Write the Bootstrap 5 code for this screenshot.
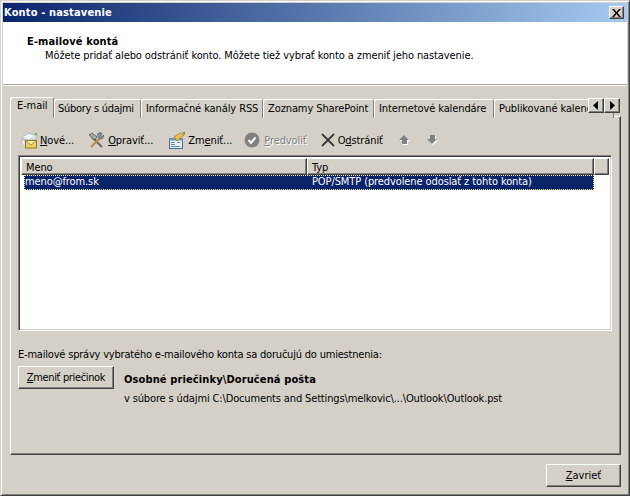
<!DOCTYPE html>
<html lang="sk"><head><meta charset="utf-8"><title>Konto - nastavenie</title>
<link href="https://cdn.jsdelivr.net/npm/bootstrap@5.3.0/dist/css/bootstrap.min.css" rel="stylesheet">
<style>
html,body{margin:0;padding:0;background:#d4d0c8;overflow:hidden}
body{width:630px;height:496px;font:11px/13px "DejaVu Sans Condensed","DejaVu Sans",sans-serif;font-stretch:condensed;color:#000;letter-spacing:-.1px}
b{letter-spacing:.12px}
u{text-decoration-thickness:1px;text-underline-offset:1px}
.win{width:630px;height:496px;background:#d4d0c8;border:1px solid;border-color:#d4d0c8 #404040 #404040 #d4d0c8;box-shadow:inset 1px 1px 0 #fff,inset -1px -1px 0 #808080;padding:2px}
.ttl{height:19px;margin:0;padding:0 2px 0 1px;background:linear-gradient(90deg,#0a246a,#a6caf0);color:#fff;font-weight:700;font-size:11px;letter-spacing:.15px}
.xbtn{width:15px;height:13px;padding:0;background:#d4d0c8;border:1px solid;border-color:#fff #404040 #404040 #fff;box-shadow:inset -1px -1px 0 #808080;border-radius:0;line-height:0;margin-right:1px}
.hdr{height:63px;background:#fff;border-bottom:1px solid #aca899;box-shadow:0 1px 0 #fff;padding:13px 0 0 24px}
.hdr b{display:block;font-size:11px;line-height:14px}
.hdr span{display:block;padding-left:18px;line-height:13px}
.tabrow{height:21px;margin:12px 6px 0 7px;position:relative;z-index:2;border:0;flex-wrap:nowrap;overflow:hidden}
.tabrow .nav-link{height:19px;margin:2px 0 0 0;padding:3px 2px 0 5px;color:#000;background:#d4d0c8;border:0;border-radius:2px 2px 0 0;box-shadow:inset 1px 1px 0 #fff,inset -1px 0 0 #808080;line-height:13px;white-space:nowrap;flex:none}
.tabrow .nav-link.active{height:21px;margin-top:0;padding:2px 6px 0 7px;background:#d4d0c8;color:#000;border:0}
.tabrow .tw2{letter-spacing:-.28px;padding-left:4px}
.tw1{width:44px}.tw2{width:87px}.tw3{width:122px}.tw4{width:111px}.tw5{width:120px}
.spin{position:absolute;left:587px;top:97px;z-index:3;display:flex}
.spin button{width:16px;height:15px;padding:0;background:#d4d0c8;border:1px solid;border-color:#fff #404040 #404040 #fff;box-shadow:inset -1px -1px 0 #808080;border-radius:0;line-height:0}
.spin button:first-child{padding-right:2px}
.spin button:last-child{padding-left:1px}
.panel{height:339px;margin:-2px 6px 0 7px;padding:14px 8px 0 7px;border:1px solid;border-color:#fff #404040 #404040 #fff;box-shadow:inset -1px -1px 0 #808080;position:relative;z-index:1}
.tool{height:18px;align-items:center;white-space:nowrap}
.tool svg{flex:none;display:block}
.tool .dis{color:#808080;text-shadow:1px 1px 0 #fff}
.i1{margin-left:3px}.t1{margin-left:2px}
.i2{margin-left:14px}.i3{margin-left:15px}.i4{margin-left:12px}.i5{margin-left:14px}.i6{margin-left:15px}.i7{margin-left:15px}
.tl{margin-left:3px}
.tp{margin-left:4px}
.lst{height:176px;margin-top:6px;background:#fff;border:1px solid;border-color:#808080 #fff #fff #808080;box-shadow:inset 1px 1px 0 #404040,inset -1px -1px 0 #d4d0c8;padding:2px 2px 0 2px}
.lhd{height:17px}
.lhd div{background:#d4d0c8;border:1px solid;border-color:#fff #404040 #404040 #fff;box-shadow:inset -1px -1px 0 #808080;padding:2px 0 0 4px;height:17px;line-height:13px}
.c1{width:286px}.c2{width:287px}
.lrw{height:15px;width:570px;margin-left:3px;background:#0a246a;color:#fff;outline:1px dotted #f5e8a0;outline-offset:-1px;line-height:14px}
.lrw span:first-child{width:288px;padding-left:1px}
.foot{margin-top:17px;letter-spacing:-.2px}
.wbtn{background:#d4d0c8;color:#000;border:1px solid;border-color:#fff #404040 #404040 #fff;box-shadow:inset -1px -1px 0 #808080;border-radius:0;font:inherit;padding:0;text-align:center}
.wbtn:hover{background:#d4d0c8;color:#000;border-color:#fff #404040 #404040 #fff}
.bmain{width:96px;height:23px;line-height:20px;flex:none;margin-top:5px;letter-spacing:-.35px}
.bclose{width:75px;height:23px;line-height:19px;margin:9px 6px 0 auto;display:block}
.fold{padding-left:9px;margin-top:12px;margin-left:1px}
.fold b{display:block;line-height:14px}
.fold span{display:block;margin-top:5px;letter-spacing:-.14px}
</style></head><body>
<div class="win d-flex flex-column position-relative">
  <div class="ttl d-flex align-items-center justify-content-between">
    <span>Konto - nastavenie</span>
    <button class="xbtn btn d-flex align-items-center justify-content-center" aria-label="Zavrieť"><svg width="9" height="8" viewBox="0 0 9 8"><path d="M0 0h2l2.500 3L7 0h2L5.500 4 9 8H7L4.500 5 2 8H0l3.500-4z" fill="#000"/></svg></button>
  </div>
  <div class="hdr"><b>E-mailové kontá</b><span>Môžete pridať alebo odstrániť konto. Môžete tiež vybrať konto a zmeniť jeho nastavenie.</span></div>
  <ul class="nav nav-tabs tabrow">
    <li class="nav-item"><a class="nav-link active tw1">E-mail</a></li>
    <li class="nav-item"><a class="nav-link tw2">Súbory s údajmi</a></li>
    <li class="nav-item"><a class="nav-link tw3">Informačné kanály RSS</a></li>
    <li class="nav-item"><a class="nav-link tw4">Zoznamy SharePoint</a></li>
    <li class="nav-item"><a class="nav-link tw5">Internetové kalendáre</a></li>
    <li class="nav-item"><a class="nav-link tw5">Publikované kalendáre</a></li>
  </ul>
  <div class="spin">
    <button class="btn d-flex align-items-center justify-content-center" aria-label="Vľavo"><svg width="5" height="9" viewBox="0 0 5 9"><path d="M5 0v9L0 4.500z" fill="#000"/></svg></button>
    <button class="btn d-flex align-items-center justify-content-center" aria-label="Vpravo"><svg width="5" height="9" viewBox="0 0 5 9"><path d="M0 0v9l5-4.500z" fill="#000"/></svg></button>
  </div>
  <div class="panel">
    <div class="tool d-flex">
      <svg class="i1" width="17" height="17" viewBox="0 0 17 17"><path d="M1 5l7-4 8 3v2l-3 2H4L1 7z" fill="#d5dde0" stroke="#9aa5a8" stroke-width=".6"/><path d="M2 5l6-3 6 2-6 3z" fill="#f3f6f6"/><path d="M14 1h2v2h-2z" fill="#5fc04a"/><path d="M1 7l3 2v6L1 12z" fill="#e6ebec" stroke="#aab" stroke-width=".5"/><rect x="4.500" y="8.500" width="11" height="7.500" fill="#f0d060" stroke="#9a7a20"/><path d="M5 9l5 4 5-4" fill="#fbeeb0" stroke="#9a7a20" stroke-width=".8"/></svg>
      <span class="t1"><u>N</u>ové...</span>
      <svg class="i2" width="17" height="17" viewBox="0 0 17 17"><path d="M4 5l10 10" stroke="#6a6a60" stroke-width="2.200"/><path d="M1 3l3-2 5 4-2 3z" fill="#a8aca8" stroke="#44484c" stroke-width=".7"/><path d="M13 5L3 15" stroke="#b98a50" stroke-width="2.200"/><path d="M10 1.500a3 3 0 0 1 4 0l-1.500 2 1.500 1 1.500-1.500a3 3 0 0 1-3 4l-2-1.500a3 3 0 0 1-.500-4z" fill="#8b949c" stroke="#44484c" stroke-width=".6"/></svg>
      <span class="tl"><u>O</u>praviť...</span>
      <svg class="i3" width="17" height="17" viewBox="0 0 17 17"><rect x="1.500" y="6.500" width="13" height="10" fill="#e8f0fa" stroke="#4a6a95"/><path d="M1 6h14v2.500H1z" fill="#6d8fc0"/><path d="M3 10.500h4M3 12.500h4M3 14.500h9M9 10.500h3" stroke="#6a86b0"/><path d="M6 5l6-4 4 2-7 6z" fill="#e9bf3f" stroke="#8d6a15" stroke-width=".6"/><path d="M14 0h3v3z" fill="#5f9e45"/></svg>
      <span class="tl">Zm<u>e</u>niť...</span>
      <svg class="i4" width="16" height="16" viewBox="0 0 16 16"><circle cx="8" cy="8" r="7.500" fill="#808080"/><path d="M4.500 8l2.500 3 4.500-5.500" fill="none" stroke="#fff" stroke-width="2"/></svg>
      <span class="tp dis"><u>P</u>redvoliť</span>
      <svg class="i5" width="14" height="14" viewBox="0 0 14 14"><path d="M1 1l12 12M13 1L1 13" stroke="#3a3a3a" stroke-width="1.800"/></svg>
      <span class="tl">O<u>d</u>strániť</span>
      <svg class="i6" width="13" height="12" viewBox="0 0 13 12"><path d="M7 2l5 5H10v4H5V7H2z" fill="#fff"/><path d="M6 1l5 5H9v4H4V6H1z" fill="#808080"/></svg>
      <svg class="i7" width="13" height="12" viewBox="0 0 13 12"><path d="M5 2h5v4h2l-5 5-5-5h3z" fill="#fff"/><path d="M4 1h5v4h2l-5 5-5-5h3z" fill="#808080"/></svg>
    </div>
    <div class="lst">
      <div class="lhd d-flex"><div class="c1">Meno</div><div class="c2">Typ</div><div class="flex-grow-1"></div></div>
      <div class="lrw d-flex"><span>meno@from.sk</span><span>POP/SMTP (predvolene odoslať z tohto konta)</span></div>
    </div>
    <div class="foot">E-mailové správy vybratého e-mailového konta sa doručujú do umiestnenia:</div>
    <div class="d-flex">
      <button class="btn wbtn bmain"><u>Z</u>meniť priečinok</button>
      <div class="fold"><b>Osobné priečinky\Doručená pošta</b><span>v súbore s údajmi C:\Documents and Settings\melkovic\...\Outlook\Outlook.pst</span></div>
    </div>
  </div>
  <button class="btn wbtn bclose"><u>Z</u>avrieť</button>
</div>
</body></html>
